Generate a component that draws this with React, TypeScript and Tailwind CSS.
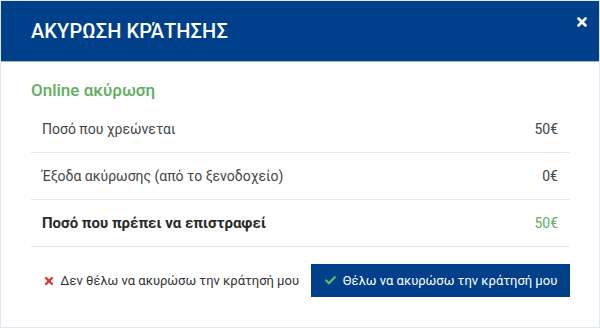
import { X, Check } from "lucide-react";

const rows = [
  { label: "Ποσό που χρεώνεται", value: "50€" },
  { label: "Έξοδα ακύρωσης (από το ξενοδοχείο)", value: "0€" },
  { label: "Ποσό που πρέπει να επιστραφεί", value: "50€", total: true },
];

export default function App() {
  return (
    <div className="h-[328px] w-[600px] bg-white font-['Roboto',sans-serif]">
      <div className="flex h-full flex-col border border-[#e3e6ea]">
        <div className="relative flex h-[61px] items-center border-b border-[#9fb6d6] bg-[#003f8a] pl-[30px]">
          <h1 className="text-[20px] font-medium tracking-[0.1px] text-white">ΑΚΥΡΩΣΗ ΚΡΆΤΗΣΗΣ</h1>
          <X className="absolute right-[10px] top-[14px] h-[14px] w-[14px] text-white" strokeWidth={4.5} />
        </div>

        <div className="pl-[30px] pr-[29px] pt-[17px]">
          <h2 className="text-[17px] font-medium leading-[22px] text-[#5fae5f]">Online ακύρωση</h2>
          <div className="mt-[5px]">
            {rows.map((r) => (
              <div
                key={r.label}
                className="flex h-[47px] items-center justify-between border-b border-[#e4e7ea] pl-[11px] pr-[12px] text-[14px]"
              >
                <span className={r.total ? "text-[15px] font-bold text-[#2a2a2a]" : "text-[#444]"}>{r.label}</span>
                <span className={r.total ? "text-[#5fae5f]" : "text-[#444]"}>{r.value}</span>
              </div>
            ))}
          </div>

          <div className="mt-[17px] flex items-center justify-end gap-[12px]">
            <button className="flex items-center gap-[5px] text-[13px] text-[#333]">
              <X className="h-[12px] w-[12px] text-[#d9342b]" strokeWidth={4.5} />
              <span>Δεν θέλω να ακυρώσω την κράτησή μου</span>
            </button>
            <button className="flex h-[33px] w-[259px] items-center justify-center gap-[6px] bg-[#003f8a] text-[13px] text-white">
              <Check className="h-[13px] w-[13px] text-[#5fbf6f]" strokeWidth={4} />
              <span>Θέλω να ακυρώσω την κράτησή μου</span>
            </button>
          </div>
        </div>
      </div>
    </div>
  );
}
